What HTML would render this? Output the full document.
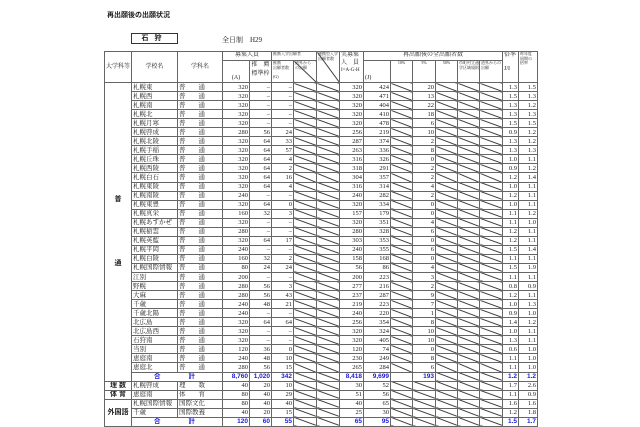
<!DOCTYPE html>
<html><head><meta charset="utf-8"><style>
body{margin:0;background:#fff;width:640px;height:426px;overflow:hidden;position:relative;font-family:"Liberation Serif","Noto Serif CJK JP",serif;color:#222}
.t{position:absolute;left:107px;top:10px;font:bold 7px "Liberation Sans","Noto Sans CJK JP",sans-serif}
.box{position:absolute;left:131px;top:33px;width:45px;height:9px;border:1px solid #333;font:bold 7px "Liberation Sans","Noto Sans CJK JP",sans-serif;text-align:center;line-height:9px;letter-spacing:6px}
.sub{position:absolute;left:222px;top:35px;font-size:7px}
table{position:absolute;left:104px;top:51px;border-collapse:collapse;table-layout:fixed;width:434px}
td{border:1px solid #666;padding:0 1px;font-size:6.5px;height:7.9px;line-height:7px;white-space:nowrap;overflow:hidden}
tbody td{height:8.05px}
.r{text-align:right}
.c{text-align:center}
.d{background:linear-gradient(to top right,transparent calc(50% - .8px),#111 50%,transparent calc(50% + .8px))}
.h td{font-size:6px;line-height:7px;vertical-align:top}
.s{font-size:4px!important;line-height:4.5px!important}
.b{color:#1a1ad8;font-weight:bold;font-family:"Liberation Sans","Noto Sans CJK JP",sans-serif}
.g{font-weight:bold;font-family:"Liberation Sans","Noto Sans CJK JP",sans-serif;text-align:center;font-size:7px}
</style></head><body>
<div class="t">再出願後の出願状況</div>
<div class="box">石狩</div>
<div class="sub">全日制　H29</div>
<table>
<colgroup><col style="width:27px"><col style="width:46px"><col style="width:45px"><col style="width:27px"><col style="width:22px"><col style="width:22px"><col style="width:23px"><col style="width:23px"><col style="width:24px"><col style="width:27px"><col style="width:22px"><col style="width:23px"><col style="width:22px"><col style="width:22px"><col style="width:23px"><col style="width:16px"><col style="width:19px"></colgroup>
<thead class="h">
<tr style="height:9px"><td rowspan="2" style="vertical-align:middle">大学科等</td><td rowspan="2" class="c" style="vertical-align:middle">学校名</td><td rowspan="2" class="c" style="vertical-align:middle">学科名</td><td colspan="2" class="c">募集人員</td><td colspan="2" class="s">推薦入学出願者</td><td rowspan="2" class="s d">連携型入学<br>出願者数</td><td rowspan="2" style="line-height:7.5px">実募集<br>人　員<br><span style="font-size:5px">I=A-G-H</span></td><td colspan="6" class="c">再出願後の全出願者数</td><td rowspan="2">倍率<br><br>J/I</td><td rowspan="2" class="s">昨年度<br>同期の<br>倍率</td></tr>
<tr style="height:22px"><td class="c" style="vertical-align:bottom">(A)</td><td class="c" style="line-height:9px">推　薦<br>標準枠</td><td class="s">推薦<br>出願者数<br><br>(G)</td><td class="s d">道外から<br>の出願</td><td style="vertical-align:bottom">(J)</td><td class="s c">10%</td><td class="s c">5%</td><td class="s c">50%</td><td class="s">市町村立通<br>学区域規則</td><td class="s">道外からの<br>出願</td></tr>
</thead>
<tbody id="b"></tbody>
</table>
<script>
var R=[["札幌東",320,"–","–",320,424,20,"1.3","1.5"],["札幌西",320,"–","–",320,471,13,"1.5","1.3"],["札幌南",320,"–","–",320,404,22,"1.3","1.2"],["札幌北",320,"–","–",320,410,18,"1.3","1.3"],["札幌月寒",320,"–","–",320,478,6,"1.5","1.5"],["札幌啓成",280,56,24,256,219,10,"0.9","1.2"],["札幌北陵",320,64,33,287,374,2,"1.3","1.2"],["札幌手稲",320,64,57,263,336,8,"1.3","1.3"],["札幌丘珠",320,64,4,316,326,0,"1.0","1.1"],["札幌西陵",320,64,2,318,291,2,"0.9","1.2"],["札幌白石",320,64,16,304,357,2,"1.2","1.4"],["札幌東陵",320,64,4,316,314,4,"1.0","1.1"],["札幌南陵",240,"–","–",240,282,2,"1.2","1.1"],["札幌東豊",320,64,0,320,334,0,"1.0","1.1"],["札幌真栄",160,32,3,157,179,0,"1.1","1.2"],["札幌あすかぜ",320,"–","–",320,351,4,"1.1","1.0"],["札幌稲雲",280,"–","–",280,328,6,"1.2","1.1"],["札幌英藍",320,64,17,303,353,0,"1.2","1.1"],["札幌平岡",240,"–","–",240,355,6,"1.5","1.4"],["札幌白陵",160,32,2,158,168,0,"1.1","1.1"],["札幌国際情報",80,24,24,56,86,4,"1.5","1.9"],["江別",200,"–","–",200,223,3,"1.1","1.1"],["野幌",280,56,3,277,216,2,"0.8","0.9"],["大麻",280,56,43,237,287,9,"1.2","1.1"],["千歳",240,48,21,219,223,7,"1.0","1.3"],["千歳北陽",240,"–","–",240,220,1,"0.9","1.0"],["北広島",320,64,64,256,354,8,"1.4","1.2"],["北広島西",320,"–","–",320,324,10,"1.0","1.1"],["石狩南",320,"–","–",320,405,10,"1.3","1.1"],["当別",120,36,0,120,74,0,"0.6","1.0"],["恵庭南",240,48,10,230,249,8,"1.1","1.0"],["恵庭北",280,56,15,265,284,6,"1.1","1.0"]];
var h="",D='<td class="d"></td>';
R.forEach(function(r,i){h+="<tr>"+(i==0?'<td rowspan="33" class="g" style="line-height:64px">普<br>通</td>':"")+"<td>"+r[0]+"</td><td>普　　通</td><td class=r>"+r[1]+"</td><td class=r>"+r[2]+"</td><td class=r>"+r[3]+"</td>"+D+D+"<td class=r>"+r[4]+"</td><td class=r>"+r[5]+"</td>"+D+"<td class=r>"+r[6]+"</td>"+D+D+D+"<td class=r>"+r[7]+"</td><td class=r>"+r[8]+"</td></tr>";});
function tot(a){return '<td colspan="2" class="b" style="letter-spacing:28px;padding-left:22px">合計</td><td class="r b">'+a[0]+'</td><td class="r b">'+a[1]+'</td><td class="r b">'+a[2]+'</td>'+D+D+'<td class="r b">'+a[3]+'</td><td class="r b">'+a[4]+'</td>'+(a[5]?'<td></td><td class="r b">'+a[5]+'</td>':D+D)+D+D+D+'<td class="r b">'+a[6]+'</td><td class="r b">'+a[7]+'</td>';}
h+="<tr>"+tot(["8,760","1,020",342,"8,418","9,699",193,"1.2","1.2"])+"</tr>";
function sp(lbl,n,dep,a){return "<td>"+n+"</td><td>"+dep+"</td><td class=r>"+a[0]+"</td><td class=r>"+a[1]+"</td><td class=r>"+a[2]+"</td>"+D+D+"<td class=r>"+a[3]+"</td><td class=r>"+a[4]+"</td>"+D+D+D+D+D+"<td class=r>"+a[5]+"</td><td class=r>"+a[6]+"</td>";}
h+='<tr><td class="g">理 数</td>'+sp("","札幌啓成","理　　数",[40,20,10,30,52,"1.7","2.6"])+"</tr>";
h+='<tr><td class="g">体 育</td>'+sp("","恵庭南","体　　育",[80,40,29,51,56,"1.1","0.9"])+"</tr>";
h+='<tr><td rowspan="3" class="g">外国語</td>'+sp("","札幌国際情報","国際文化",[80,40,40,40,65,"1.6","1.6"])+"</tr>";
h+="<tr>"+sp("","千歳","国際教養",[40,20,15,25,30,"1.2","1.8"])+"</tr>";
h+="<tr>"+tot([120,60,55,65,95,0,"1.5","1.7"])+"</tr>";
document.getElementById("b").innerHTML=h;
</script>
</body></html>
